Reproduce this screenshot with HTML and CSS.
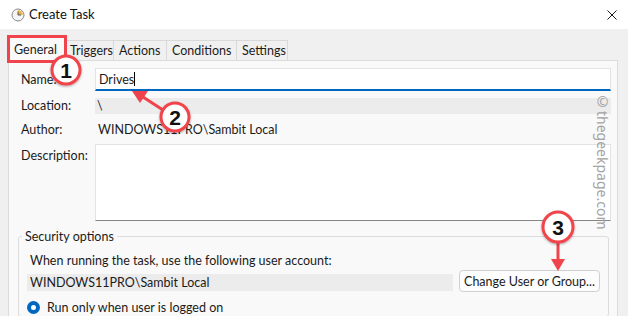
FILE: index.html
```html
<!DOCTYPE html>
<html lang="en">
<head>
    <meta charset="utf-8">
    <title>Create Task</title>
    <link rel="stylesheet" href="styles.css">
</head>
<body>
    <div class="window">
        <div class="titlebar">
            <svg class="app-icon" width="14" height="14" viewBox="0 0 14 14">
                <circle cx="7" cy="7" r="6" fill="#f4f4f4" stroke="#8a8a8a" stroke-width="1"/>
                <path d="M7 7 L7 2.2 A4.8 4.8 0 0 1 11.8 7 Z" fill="#f0b43c"/>
                <path d="M7 3.5 V7 H10" fill="none" stroke="#555" stroke-width="1"/>
            </svg>
            <span class="title">Create Task</span>
            <svg class="close" width="10" height="10" viewBox="0 0 10 10">
                <path d="M0.5 0.5 L9.5 9.5 M9.5 0.5 L0.5 9.5" stroke="#1a1a1a" stroke-width="1"/>
            </svg>
        </div>

        <div class="content">
            <div class="tabs">
                <div class="tab active">General</div>
                <div class="tab">Triggers</div>
                <div class="tab">Actions</div>
                <div class="tab">Conditions</div>
                <div class="tab">Settings</div>
            </div>

            <div class="panel">
                <div class="row row-name">
                    <label>Name:</label>
                    <div class="input">Drives<span class="caret"></span></div>
                </div>
                <div class="row row-location">
                    <label>Location:</label>
                    <div class="readonly">\</div>
                </div>
                <div class="row row-author">
                    <label>Author:</label>
                    <div class="plain">WINDOWS11PRO\Sambit Local</div>
                </div>
                <div class="row row-desc">
                    <label>Description:</label>
                    <div class="textarea"></div>
                </div>

                <fieldset class="security">
                    <legend>Security options</legend>
                    <p class="hint">When running the task, use the following user account:</p>
                    <div class="account-row">
                        <div class="account">WINDOWS11PRO\Sambit Local</div>
                        <button class="btn">Change User or Group...</button>
                    </div>
                    <div class="radio-row">
                        <span class="radio"></span>
                        <span>Run only when user is logged on</span>
                    </div>
                </fieldset>
            </div>
        </div>

        <div class="watermark">©thegeekpage.com</div>

        <svg class="marks" width="628" height="316" viewBox="0 0 628 316">
            <defs>
                <filter id="shadow" x="-30%" y="-30%" width="160%" height="160%">
                    <feDropShadow dx="0" dy="1" stdDeviation="1.2" flood-color="#000" flood-opacity="0.35"/>
                </filter>
            </defs>
            <rect x="8.5" y="36.5" width="57" height="25" fill="none" stroke="#f0444c" stroke-width="3"/>

            <!-- arrow 2 -->
            <line x1="163" y1="110" x2="143" y2="97" stroke="#f0444c" stroke-width="3"/>
            <polygon points="132,91 148,91 140,103" fill="#f0444c"/>

            <!-- arrow 3 -->
            <line x1="558" y1="243" x2="558" y2="260" stroke="#f0444c" stroke-width="3"/>
            <polygon points="551,259 565,259 558,271" fill="#f0444c"/>

            <g filter="url(#shadow)">
                <circle cx="66" cy="70" r="14" fill="#fff" stroke="#f0444c" stroke-width="3"/>
                <circle cx="175" cy="117" r="14" fill="#fff" stroke="#f0444c" stroke-width="3"/>
                <circle cx="558" cy="227" r="15" fill="#fff" stroke="#f0444c" stroke-width="3"/>
            </g>
            <text x="66" y="77.5" class="num">1</text>
            <text x="175" y="124.5" class="num">2</text>
            <text x="558" y="234.5" class="num">3</text>
        </svg>
    </div>
</body>
</html>
```

FILE: styles.css
```css
* {
    margin: 0;
    padding: 0;
    box-sizing: border-box;
}

body {
    font-family: Lato, "Noto Sans", sans-serif;
    font-size: 12.5px;
    line-height: 17px;
    color: #1b1b1b;
    background: #f0f0f0;
}

.window {
    position: relative;
    width: 628px;
    height: 316px;
    overflow: hidden;
    background: #f0f0f0;
}

.titlebar {
    height: 29px;
    background: #fff;
    display: flex;
    align-items: center;
    padding-left: 11px;
}

.app-icon {
    margin-right: 4px;
}

.title {
    font-size: 13px;
    color: #111;
}

.close {
    margin-left: auto;
    margin-right: 11px;
}

.content {
    padding: 11px 10px 0 8px;
}

.tabs {
    display: flex;
    height: 20px;
}

.tab {
    padding: 0 5px;
    border: 1px solid #d9d9d9;
    border-bottom: none;
    border-left: none;
    display: flex;
    align-items: center;
    height: 20px;
    background: #f0f0f0;
    white-space: nowrap;
}

.tab.active {
    background: #f9f9f9;
    border-left: 1px solid #d9d9d9;
    width: 57px;
    margin-top: -3px;
    height: 23px;
}

.tab:nth-child(2) { width: 49px; }
.tab:nth-child(3) { width: 53px; }
.tab:nth-child(4) { width: 70px; }
.tab:nth-child(5) { width: 51px; }

.panel {
    background: #f9f9f9;
    border: 1px solid #dcdcdc;
    height: 260px;
    padding: 7px 0 0 12px;
}

.row {
    display: flex;
    align-items: center;
}

.row label {
    width: 74px;
    flex: none;
}

.input {
    width: 516px;
    height: 23px;
    background: #fff;
    border: 1px solid #e3e3e3;
    border-bottom: 2px solid #0067c0;
    padding-left: 3px;
    display: flex;
    align-items: center;
}

.caret {
    width: 1px;
    height: 14px;
    background: #000;
}

.row-location {
    margin-top: 6px;
}

.readonly {
    width: 516px;
    height: 16px;
    background: #ececec;
    padding-left: 2px;
    line-height: 16px;
}

.row-author {
    margin-top: 4px;
    height: 22px;
}

.plain {
    padding-left: 3px;
}

.row-desc {
    margin-top: 4px;
    align-items: flex-start;
}

.row-desc label {
    padding-top: 3px;
}

.textarea {
    width: 516px;
    height: 77px;
    background: #fff;
    border: 1px solid #e3e3e3;
    border-bottom: 1px solid #868686;
}

.security {
    margin: 7px 0 0 -3px;
    width: 591px;
    border: 1px solid #dcdcdc;
    border-radius: 3px;
    padding: 0 0 0 8px;
}

.security legend {
    padding: 0 3px;
    margin-left: -5px;
}

.hint {
    margin-top: 7px;
    padding-left: 3px;
}

.account-row {
    display: flex;
    align-items: flex-start;
    margin-top: 1px;
}

.account {
    width: 426px;
    height: 17px;
    margin-top: 4px;
    background: #ececec;
    padding-left: 3px;
    line-height: 17px;
}

.btn {
    margin-left: 6px;
    width: 141px;
    height: 22px;
    background: #fdfdfd;
    border: 1px solid #d0d0d0;
    border-radius: 4px;
    font: inherit;
    color: inherit;
    white-space: nowrap;
}

.radio-row {
    display: flex;
    align-items: center;
    margin-top: 7px;
    gap: 7px;
}

.radio {
    width: 13px;
    height: 13px;
    border-radius: 50%;
    border: 4px solid #0067c0;
    background: #fff;
}

.watermark {
    position: absolute;
    left: 594px;
    top: 92px;
    writing-mode: vertical-rl;
    font-family: "Noto Sans", sans-serif;
    font-size: 14px;
    color: #a3a3a3;
}

.marks {
    position: absolute;
    left: 0;
    top: 0;
}

.num {
    font-family: "Liberation Sans", Arial, sans-serif;
    font-weight: bold;
    font-size: 21px;
    text-anchor: middle;
    fill: #111;
}
```
